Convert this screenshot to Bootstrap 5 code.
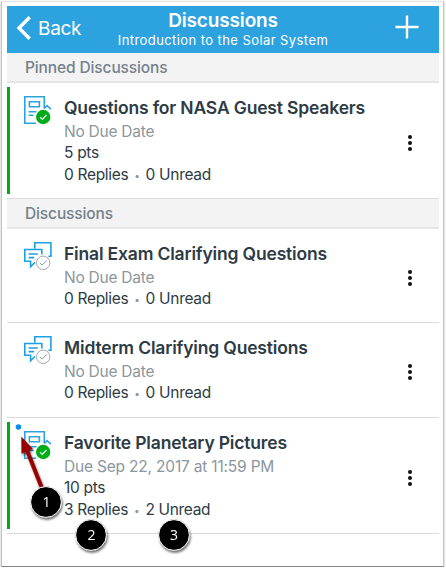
<!DOCTYPE html>
<html lang="en">
<head>
<meta charset="utf-8">
<meta name="viewport" content="width=device-width, initial-scale=1">
<title>Discussions</title>
<link href="https://cdn.jsdelivr.net/npm/bootstrap@5.3.0/dist/css/bootstrap.min.css" rel="stylesheet">
<style>
body{font-family:Inter,"Liberation Sans",sans-serif;color:#2d3b45;background:#fff;overflow:hidden;font-size:15.5px}
.frame{width:443px;height:566px;margin:1px 0 0 1px;border:1px solid #c4c4c4;border-top-color:#e2e2e2;border-bottom:1px solid #858585;box-shadow:0 1px 2px rgba(0,0,0,.3);padding:4px 4px 0 5px}
.topbar{height:47px;background:#2ca2df;color:#fff}
.side{width:90px}
.back{font-size:19px;line-height:24px;letter-spacing:-.3px;margin-left:5px;margin-top:-2px}
.heading{font-size:19px;line-height:22px;font-weight:600;letter-spacing:-.15px;margin-top:4px}
.sub{font-size:13px;line-height:17px;letter-spacing:.42px;white-space:nowrap}
.plus{margin:9px 20px 0 0}
.section{height:30px;background:#f3f3f4;border-bottom:2px solid #e3e5e7;color:#73818c;font-size:15.5px;line-height:30px;font-weight:500;padding-left:18px;margin:0;letter-spacing:-.12px}
.entry{border-bottom:1px solid #d8dadb;height:95px;padding-top:13px}
.entry.short{height:94px}
.entry.tall{height:116px}
.bar{width:3px;height:107px;background:#00ac18;margin-top:-9px}
.bar.none{background:none}
.ico{width:32px;height:32px;margin-left:12px}
.words{margin-left:10px;white-space:nowrap}
.name{font-size:17.5px;line-height:24px;font-weight:600;margin:0;letter-spacing:-.17px}
.line{line-height:22px;height:22px;letter-spacing:-.32px}
.line.due{color:#8b969e;padding-top:.5px;letter-spacing:-.25px}
.line.date{letter-spacing:-.19px}
.dot{color:#8b969e;font-size:10px;margin:0 6px 0 6px;vertical-align:1px;line-height:1}
.more{width:6px;height:18px;margin-right:26px;margin-top:27px}
.entry.tall .more{margin-top:38px}
.overlay{left:0;top:0;pointer-events:none}
</style>
<script src="https://cdn.jsdelivr.net/npm/bootstrap@5.3.0/dist/js/bootstrap.bundle.min.js"></script>
</head>
<body>
<svg class="d-none">
<symbol id="assignment" viewBox="0 0 32 32"><g fill="none" stroke="#2ca2df" stroke-width="1.6"><path d="M14 27.3H2.8V.8h19.5v12M7.4 5.8h10v5h-10zM6.5 15.8h8M6.5 19.3h5M22.5 12.3l2.5-2.6 4 3.4"/></g><circle cx="21.2" cy="21" r="7.2" fill="#00ac18"/><path d="M18 21.2l2.3 2.2 4.2-4.4" fill="none" stroke="#fff" stroke-width="1.1"/></symbol>
<symbol id="chat" viewBox="0 0 32 32"><g fill="none" stroke="#1c9fe6" stroke-width="1.6"><path d="M12.8 6.5V.8h16.1v13.5h-2.5M13 20.2l-4.4 4.5v-5.4H2.8V7.5h17v5M6.6 12h9.2M6.6 15.6h5.6"/></g><circle cx="21.2" cy="20.8" r="6.7" fill="#fff" stroke="#a3a8ac"/><path d="M17.9 20.8l2.3 2.3 4.4-4.5" fill="none" stroke="#8b969e"/></symbol>
<symbol id="dots" viewBox="0 0 6 18"><g fill="#111"><circle cx="3" cy="3" r="2"/><circle cx="3" cy="9" r="2"/><circle cx="3" cy="15" r="2"/></g></symbol>
</svg>
<main class="frame position-relative">
<header class="topbar d-flex justify-content-between">
<div class="side d-flex align-items-center"><svg width="18" height="26" viewBox="0 0 18 26" class="ms-2 mb-1"><path d="M14.7 2.2L4 13l10.7 10.8" fill="none" stroke="#fff" stroke-width="3.4"/></svg><span class="back">Back</span></div>
<div class="text-center"><h1 class="heading mb-0">Discussions</h1><div class="sub">Introduction to the Solar System</div></div>
<div class="side text-end"><svg width="24" height="24" viewBox="0 0 24 24" class="plus"><path d="M12 .5v23M.5 12h23" stroke="#fff" stroke-width="2.4"/></svg></div>
</header>
<h2 class="section">Pinned Discussions</h2>
<article class="entry tall d-flex"><div class="bar"></div><svg class="ico"><use href="#assignment"/></svg><div class="words flex-grow-1"><h3 class="name">Questions for NASA Guest Speakers</h3><div class="line due">No Due Date</div><div class="line">5 pts</div><div class="line">0 Replies<span class="dot">•</span>0 Unread</div></div><svg class="more"><use href="#dots"/></svg></article>
<h2 class="section">Discussions</h2>
<article class="entry short d-flex"><div class="bar none"></div><svg class="ico"><use href="#chat"/></svg><div class="words flex-grow-1"><h3 class="name">Final Exam Clarifying Questions</h3><div class="line due">No Due Date</div><div class="line">0 Replies<span class="dot">•</span>0 Unread</div></div><svg class="more"><use href="#dots"/></svg></article>
<article class="entry d-flex"><div class="bar none"></div><svg class="ico"><use href="#chat"/></svg><div class="words flex-grow-1"><h3 class="name">Midterm Clarifying Questions</h3><div class="line due">No Due Date</div><div class="line">0 Replies<span class="dot">•</span>0 Unread</div></div><svg class="more"><use href="#dots"/></svg></article>
<article class="entry tall d-flex"><div class="bar"></div><svg class="ico"><use href="#assignment"/></svg><div class="words flex-grow-1"><h3 class="name">Favorite Planetary Pictures</h3><div class="line due date">Due Sep 22, 2017 at 11:59 PM</div><div class="line">10 pts</div><div class="line">3 Replies<span class="dot">•</span>2 Unread</div></div><svg class="more"><use href="#dots"/></svg></article>
</main>
<svg class="overlay position-fixed" width="446" height="569" viewBox="0 0 446 569">
<defs><filter id="shade" x="-30%" y="-30%" width="170%" height="170%"><feDropShadow dx="1" dy="2" stdDeviation="1.2" flood-opacity=".55"/></filter></defs>
<circle cx="18.5" cy="427" r="2.8" fill="#0a8ee6"/>
<g filter="url(#shade)"><path d="M41.5 487L26.5 449" stroke="#990006" stroke-width="4"/><path d="M21.3 436.5l11.5 12.2-11.3 5z" fill="#990006"/></g>
<g filter="url(#shade)" fill="#000" stroke="#fff" stroke-width="1"><circle cx="46" cy="502" r="15.4"/><circle cx="91" cy="535" r="15.4"/><circle cx="174" cy="535" r="15.4"/></g>
<g fill="#fff" font-family="Open Sans, sans-serif" font-size="14" text-anchor="middle"><text x="46.5" y="507">1</text><text x="91.5" y="540">2</text><text x="174" y="540">3</text></g>
</svg>
</body>
</html>
